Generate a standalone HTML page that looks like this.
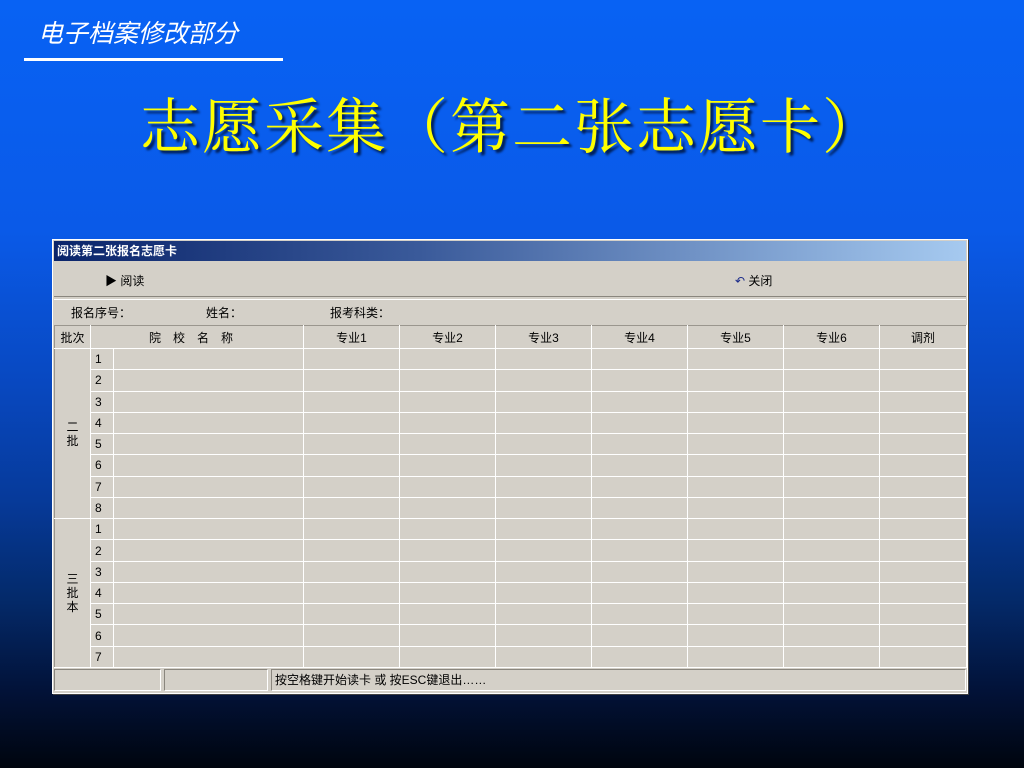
<!DOCTYPE html>
<html><head><meta charset="utf-8"><style>
body{margin:0;width:1024px;height:768px;overflow:hidden;position:relative;font-family:"Liberation Sans","Noto Sans CJK SC",sans-serif;
background:linear-gradient(180deg,#0862f4 0%,#0a5ae8 30%,#0848c0 50%,#063a9a 65%,#042a6a 78%,#021238 90%,#00050e 100%);}
.sub{position:absolute;left:38px;top:14px;color:#fff;font-style:italic;font-size:25px;font-family:"Liberation Sans","Noto Sans CJK SC",sans-serif;}
.line{position:absolute;left:24px;top:58px;width:259px;height:3px;background:#fff;}
.title{position:absolute;left:140px;top:80px;color:#ffff00;font-size:60px;font-family:"Liberation Serif","Noto Serif CJK SC",serif;text-shadow:3px 3px 2px #00205a;white-space:nowrap;letter-spacing:2px}
.win{position:absolute;left:52px;top:239px;width:916px;height:455px;background:#d4d0c8;border:1px solid #fff;box-sizing:border-box;box-shadow:1px 1px 0 #404040}
.tb{position:absolute;left:1px;top:1px;width:912px;height:20px;background:linear-gradient(90deg,#0a246a,#3a5a9a 40%,#a6caf0);color:#fff;font-weight:bold;font-size:12px;line-height:20px;padding-left:3px;box-sizing:border-box}
.t{position:absolute;font-size:12px;color:#000;white-space:nowrap}
table{position:absolute;left:1px;top:85px;border-collapse:collapse;table-layout:fixed;font-size:12px}
td{border:1px solid #fff;border-left-color:#9a968e;border-top-color:#9a968e;padding:0;height:20.27px;text-align:center;background:#d4d0c8}
td.n{text-align:left;padding-left:4px}
.sb{position:absolute;top:429px;height:22px;border:1px solid;border-color:#8a867e #fff #fff #8a867e;box-sizing:border-box;font-size:12px;line-height:20px;padding-left:3px}
</style></head><body>
<div class="sub">电子档案修改部分</div>
<div class="line"></div>
<div class="title">志愿采集（第二张志愿卡）</div>
<div class="win">
<div class="tb">阅读第二张报名志愿卡</div>
<div class="t" style="left:52px;top:32px">▶ 阅读</div>
<div class="t" style="left:682px;top:32px"><span style="color:#1a2a8a">↶</span> 关闭</div>
<div style="position:absolute;left:1px;top:56px;width:912px;height:2px;border-top:1px solid #8a867e;border-bottom:1px solid #fff"></div>
<div class="t" style="left:18px;top:64px">报名序号：</div>
<div class="t" style="left:153px;top:64px">姓名：</div>
<div class="t" style="left:277px;top:64px">报考科类：</div>
<table>
<colgroup><col style="width:36px"><col style="width:23px"><col style="width:190px"><col style="width:96px"><col style="width:96px"><col style="width:96px"><col style="width:96px"><col style="width:96px"><col style="width:96px"><col style="width:87px"></colgroup>
<tr style="height:23px"><td>批次</td><td colspan="2" style="letter-spacing:12px">院校名称</td><td>专业1</td><td>专业2</td><td>专业3</td><td>专业4</td><td>专业5</td><td>专业6</td><td>调剂</td></tr>
<tr><td rowspan="8" style="line-height:14px">二<br>批</td><td class="n">1</td><td></td><td></td><td></td><td></td><td></td><td></td><td></td><td></td></tr>
<tr><td class="n">2</td><td></td><td></td><td></td><td></td><td></td><td></td><td></td><td></td></tr>
<tr><td class="n">3</td><td></td><td></td><td></td><td></td><td></td><td></td><td></td><td></td></tr>
<tr><td class="n">4</td><td></td><td></td><td></td><td></td><td></td><td></td><td></td><td></td></tr>
<tr><td class="n">5</td><td></td><td></td><td></td><td></td><td></td><td></td><td></td><td></td></tr>
<tr><td class="n">6</td><td></td><td></td><td></td><td></td><td></td><td></td><td></td><td></td></tr>
<tr><td class="n">7</td><td></td><td></td><td></td><td></td><td></td><td></td><td></td><td></td></tr>
<tr><td class="n">8</td><td></td><td></td><td></td><td></td><td></td><td></td><td></td><td></td></tr>
<tr><td rowspan="7" style="line-height:14px">三<br>批<br>本</td><td class="n">1</td><td></td><td></td><td></td><td></td><td></td><td></td><td></td><td></td></tr>
<tr><td class="n">2</td><td></td><td></td><td></td><td></td><td></td><td></td><td></td><td></td></tr>
<tr><td class="n">3</td><td></td><td></td><td></td><td></td><td></td><td></td><td></td><td></td></tr>
<tr><td class="n">4</td><td></td><td></td><td></td><td></td><td></td><td></td><td></td><td></td></tr>
<tr><td class="n">5</td><td></td><td></td><td></td><td></td><td></td><td></td><td></td><td></td></tr>
<tr><td class="n">6</td><td></td><td></td><td></td><td></td><td></td><td></td><td></td><td></td></tr>
<tr><td class="n">7</td><td></td><td></td><td></td><td></td><td></td><td></td><td></td><td></td></tr>
</table>
<div class="sb" style="left:1px;width:107px"></div>
<div class="sb" style="left:111px;width:104px"></div>
<div class="sb" style="left:218px;width:695px">按空格键开始读卡 或 按ESC键退出……</div>
</div>
</body></html>
